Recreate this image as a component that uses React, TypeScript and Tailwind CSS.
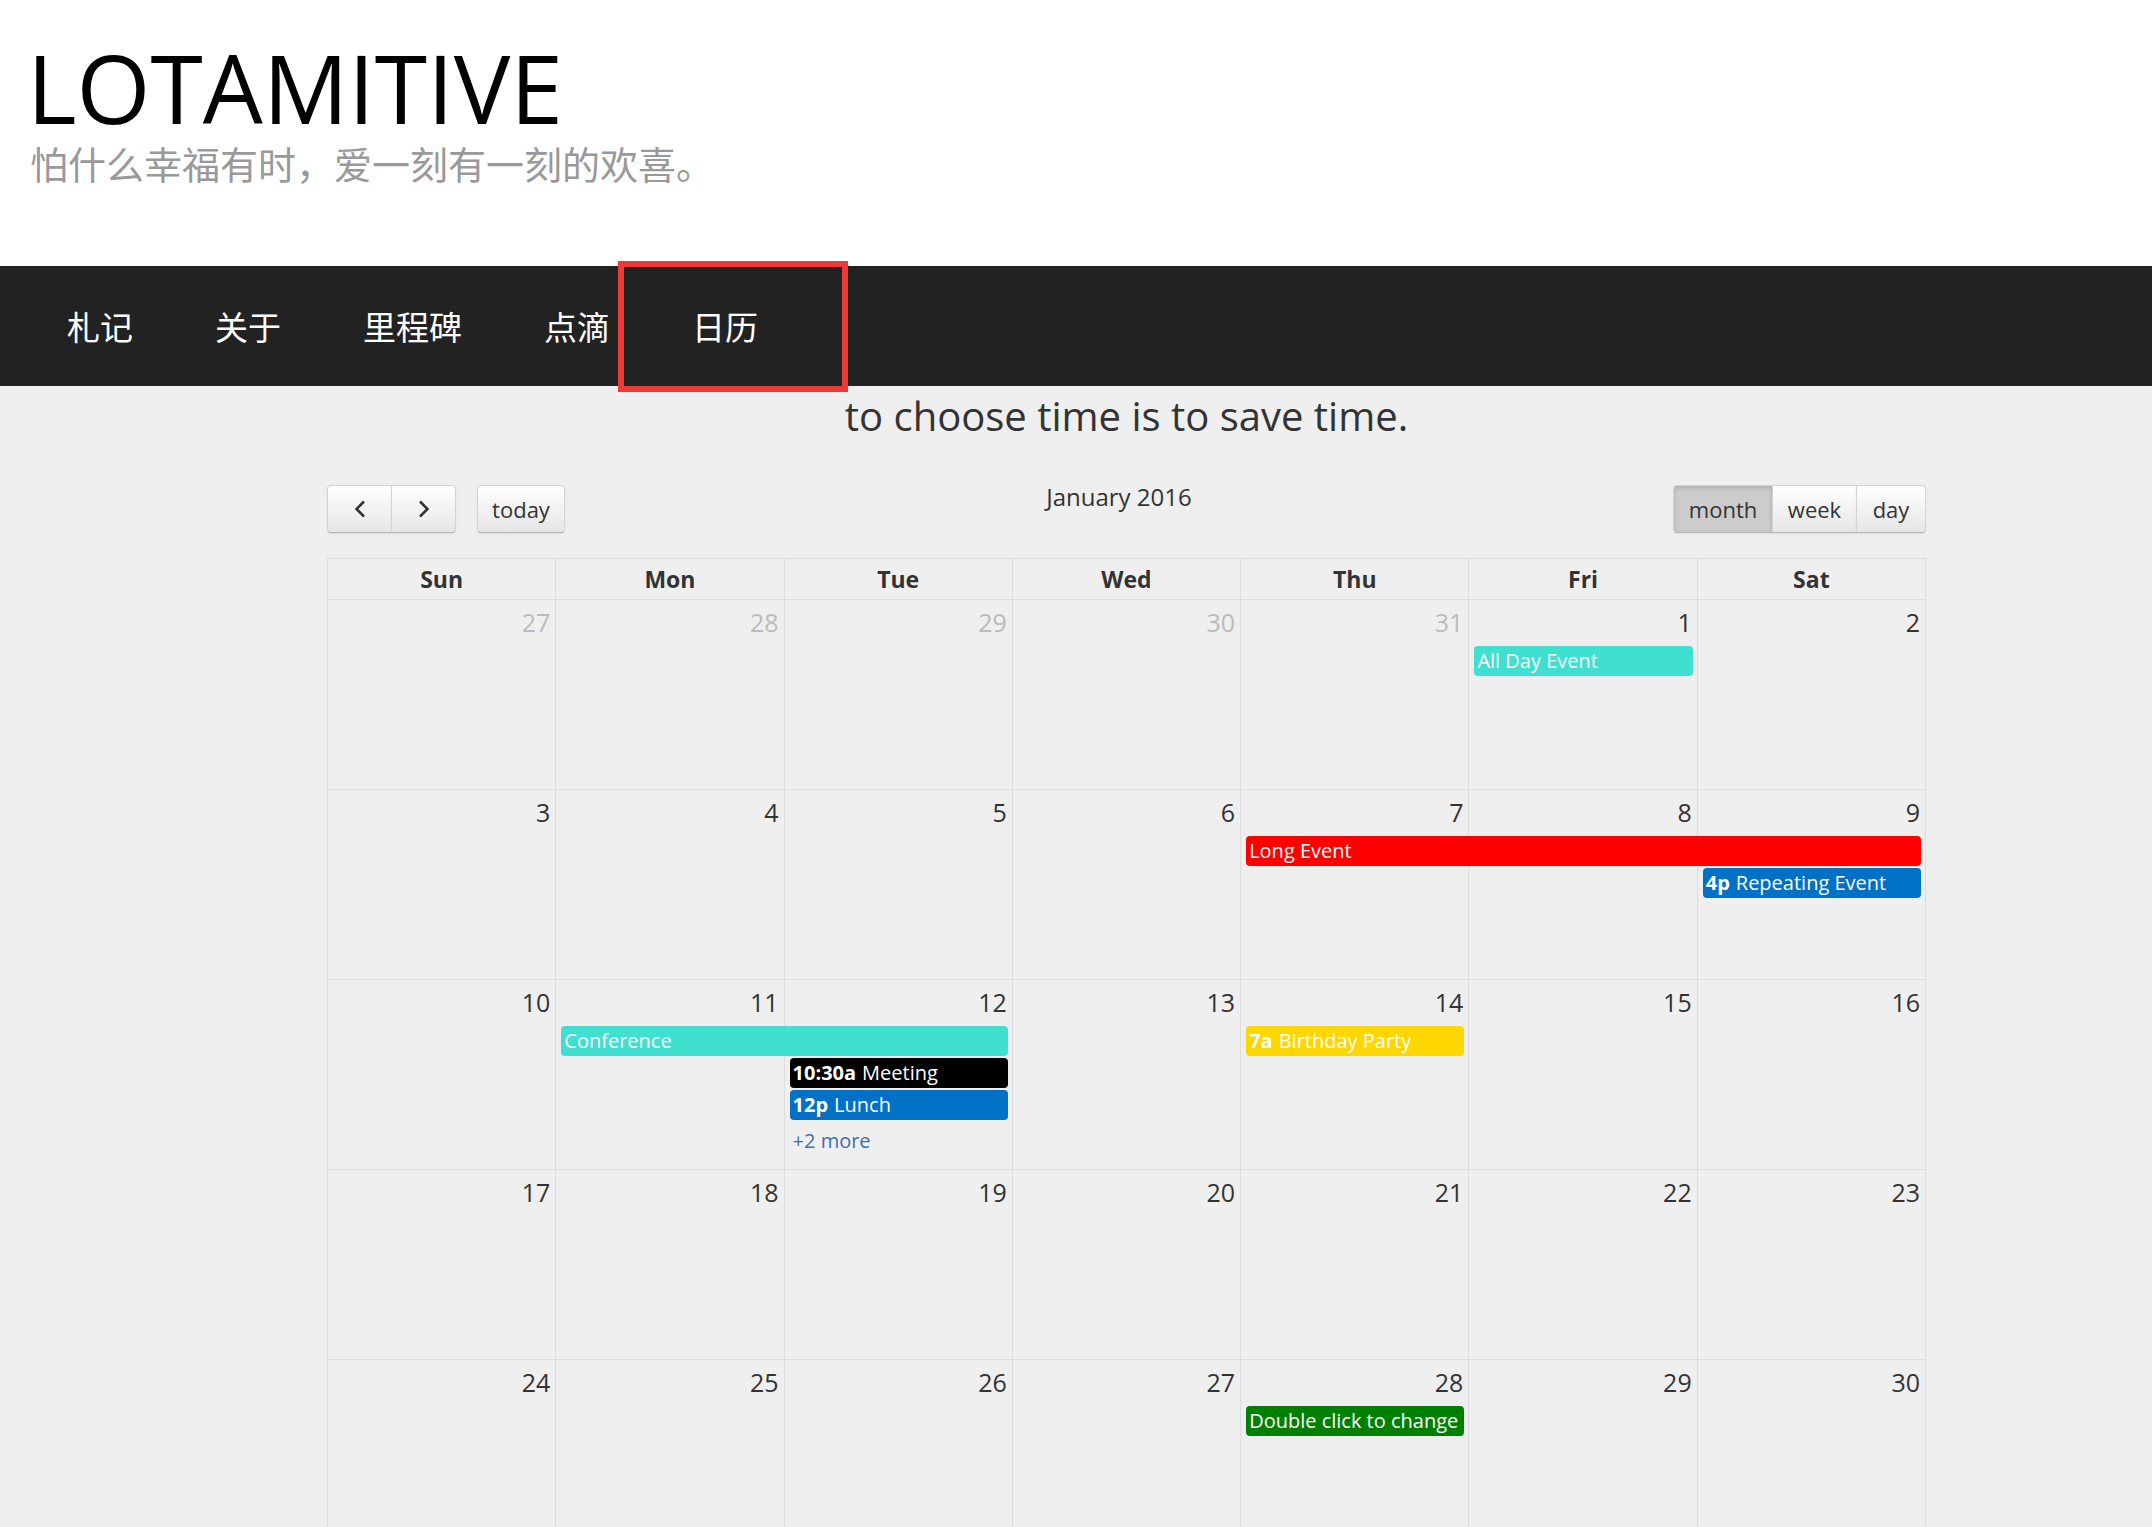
const sans = "font-['Open_Sans','Noto_Sans_CJK_SC',sans-serif]";
const cjk = "font-['Noto_Sans_CJK_SC','Noto_Sans',sans-serif]";

type Day = { d: number; o?: boolean };
type Ev = {
  col: string;
  row: string;
  title: string;
  time?: string;
  bg?: string;
  more?: boolean;
};

const colStart = ['', 'col-start-1', 'col-start-2', 'col-start-3', 'col-start-4', 'col-start-5', 'col-start-6', 'col-start-7'];

const weeks: { days: Day[]; events: Ev[] }[] = [
  {
    days: [{ d: 27, o: true }, { d: 28, o: true }, { d: 29, o: true }, { d: 30, o: true }, { d: 31, o: true }, { d: 1 }, { d: 2 }],
    events: [{ col: 'col-start-6 col-span-1', row: 'row-start-2', title: 'All Day Event', bg: 'bg-[#40e0d0]' }],
  },
  {
    days: [3, 4, 5, 6, 7, 8, 9].map((d) => ({ d })),
    events: [
      { col: 'col-start-5 col-span-3', row: 'row-start-2', title: 'Long Event', bg: 'bg-[#ff0000]' },
      { col: 'col-start-7 col-span-1', row: 'row-start-3', title: 'Repeating Event', time: '4p', bg: 'bg-[#0071c5]' },
    ],
  },
  {
    days: [10, 11, 12, 13, 14, 15, 16].map((d) => ({ d })),
    events: [
      { col: 'col-start-2 col-span-2', row: 'row-start-2', title: 'Conference', bg: 'bg-[#40e0d0]' },
      { col: 'col-start-3 col-span-1', row: 'row-start-3', title: 'Meeting', time: '10:30a', bg: 'bg-black' },
      { col: 'col-start-3 col-span-1', row: 'row-start-4', title: 'Lunch', time: '12p', bg: 'bg-[#0071c5]' },
      { col: 'col-start-3 col-span-1', row: 'row-start-5', title: '+2 more', more: true },
      { col: 'col-start-5 col-span-1', row: 'row-start-2', title: 'Birthday Party', time: '7a', bg: 'bg-[#ffd700]' },
    ],
  },
  { days: [17, 18, 19, 20, 21, 22, 23].map((d) => ({ d })), events: [] },
  {
    days: [24, 25, 26, 27, 28, 29, 30].map((d) => ({ d })),
    events: [{ col: 'col-start-5 col-span-1', row: 'row-start-2', title: 'Double click to change', bg: 'bg-[#008000]' }],
  },
  {
    days: [{ d: 31 }, { d: 1, o: true }, { d: 2, o: true }, { d: 3, o: true }, { d: 4, o: true }, { d: 5, o: true }, { d: 6, o: true }],
    events: [],
  },
];

const btn =
  'h-[48px] text-[22px] text-[#333] border border-[#d4d4d4] border-b-[#b5b5b5] flex items-center justify-center';
const btnUp =
  'bg-linear-to-b from-white to-[#e6e6e6] shadow-[inset_0_1px_0_rgba(255,255,255,0.2),0_1px_2px_rgba(0,0,0,0.08)]';
const btnDown = 'bg-[#cccccc] shadow-[inset_0_2px_4px_rgba(0,0,0,0.15),0_1px_2px_rgba(0,0,0,0.05)]';

const Chevron = ({ dir }: { dir: 'l' | 'r' }) => (
  <svg width="14" height="18" viewBox="0 0 14 18" fill="none" stroke="#333" strokeWidth={2.5}>
    {dir === 'l' ? <polyline points="11,1.5 3.5,9 11,16.5" /> : <polyline points="3,1.5 10.5,9 3,16.5" />}
  </svg>
);

const App = () => {
  return (
    <div className={`h-[1527px] overflow-hidden bg-[#efefef] ${sans}`}>
      {/* header */}
      <div className="h-[266px] bg-white pl-[27px] pt-[40px]">
        <h1 className="text-[95px] leading-none text-black">LOTAMITIVE</h1>
        <p className={`mt-[6px] pl-[3px] text-[38px] leading-[1.15] text-[#999] ${cjk}`}>
          怕什么幸福有时，爱一刻有一刻的欢喜。
        </p>
      </div>

      {/* nav */}
      <div className={`relative flex h-[120px] items-center bg-[#222] pl-[26px] ${cjk}`}>
        {['札记', '关于', '里程碑', '点滴', '日历'].map((n) => (
          <a key={n} className="px-[41px] text-[33px] leading-none text-white">
            {n}
          </a>
        ))}
        <div className="absolute left-[618px] top-[-5px] h-[131px] w-[230px] border-[6px] border-[#f03838]" />
      </div>

      <div className="ml-[327px] w-[1599px] text-[#333]">
        <h2 className="mt-[6px] text-center text-[40px] leading-[48px]">to choose time is to save time.</h2>

        {/* toolbar */}
        <div className="mt-[45px] flex h-[48px] items-start">
          <div className="flex">
            <button className={`${btn} ${btnUp} w-[65px] rounded-l-[4px]`}>
              <Chevron dir="l" />
            </button>
            <button className={`${btn} ${btnUp} -ml-px w-[65px] rounded-r-[4px]`}>
              <Chevron dir="r" />
            </button>
            <button className={`${btn} ${btnUp} ml-[21px] w-[88px] rounded-[4px]`}>today</button>
          </div>
          <div className="-mt-[2px] flex-1 text-center text-[24px] leading-[1.2]">January 2016</div>
          <div className="flex">
            <button className={`${btn} ${btnDown} w-[100px] rounded-l-[4px]`}>month</button>
            <button className={`${btn} ${btnUp} -ml-px w-[85px]`}>week</button>
            <button className={`${btn} ${btnUp} -ml-px w-[70px] rounded-r-[4px]`}>day</button>
          </div>
        </div>

        {/* calendar */}
        <div className="mt-[25px] border-l border-[#ddd]">
          <div className="grid grid-cols-7 border-t border-[#ddd]">
            {['Sun', 'Mon', 'Tue', 'Wed', 'Thu', 'Fri', 'Sat'].map((d) => (
              <div key={d} className="flex h-[40px] items-center justify-center border-r border-[#ddd] text-[23px] font-bold">
                {d}
              </div>
            ))}
          </div>
          {weeks.map((w, wi) => (
            <div
              key={wi}
              className="grid h-[190px] grid-cols-7 grid-rows-[46px_32px_32px_32px_1fr] border-t border-[#ddd]"
            >
              {w.days.map((_, i) => (
                <div key={'bg' + i} className={`${colStart[i + 1]} row-start-1 row-end-6 border-r border-[#ddd]`} />
              ))}
              {w.days.map((day, i) => (
                <div
                  key={'n' + i}
                  className={`${colStart[i + 1]} row-start-1 pr-[6px] pt-[5px] text-right text-[25px] leading-[1.4] ${
                    day.o ? 'text-[#bbb]' : 'text-[#333]'
                  }`}
                >
                  {day.d}
                </div>
              ))}
              {w.events.map((e, ei) =>
                e.more ? (
                  <div key={ei} className={`${e.col} ${e.row} ml-[8px] pt-[4px] text-[20px] leading-[30px] text-[#3f6fb0]`}>
                    {e.title}
                  </div>
                ) : (
                  <div
                    key={ei}
                    className={`${e.col} ${e.row} ml-[5px] mr-[5px] h-[30px] overflow-hidden whitespace-nowrap rounded-[4px] px-[3px] text-[20px] leading-[30px] text-white ${e.bg}`}
                  >
                    {e.time && <span className="mr-[6px] font-bold">{e.time}</span>}
                    {e.title}
                  </div>
                ),
              )}
            </div>
          ))}
        </div>
      </div>
    </div>
  );
};

export default App;
